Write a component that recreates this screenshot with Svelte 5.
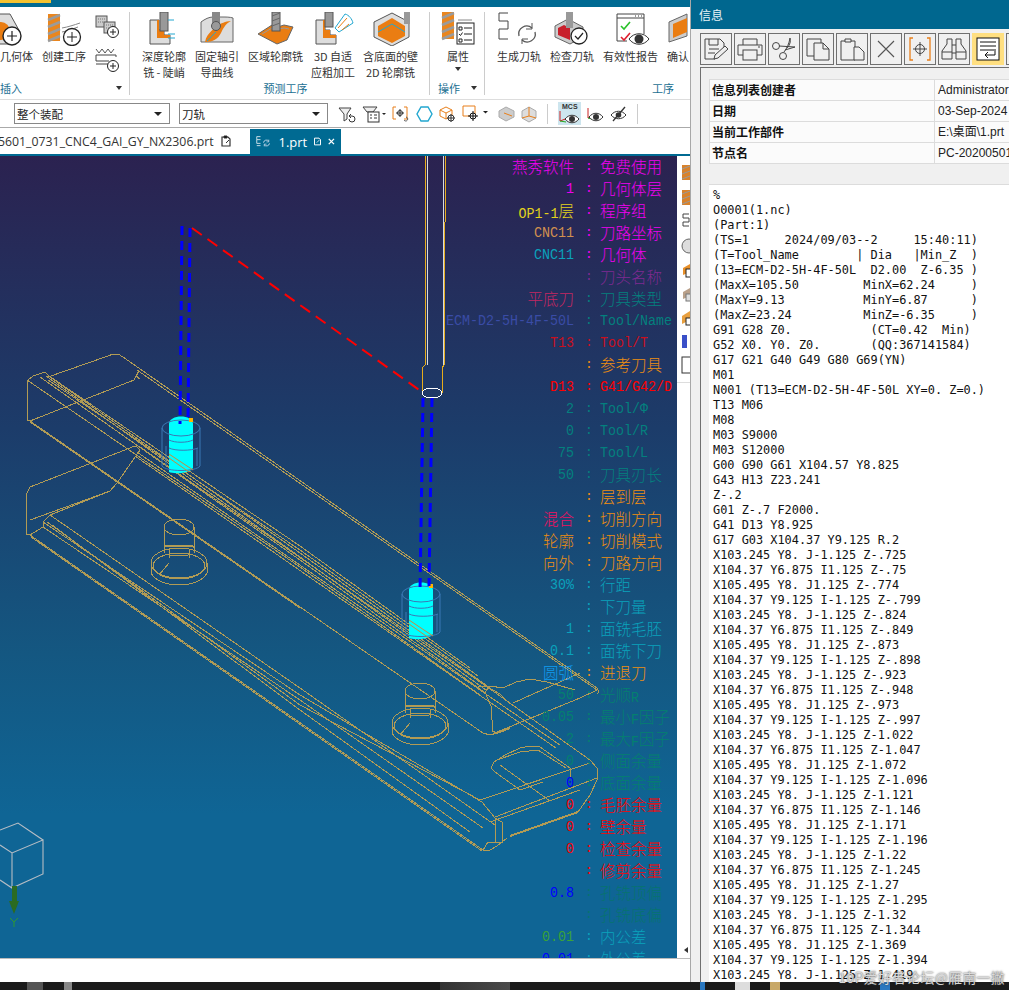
<script>
  const rows = [
    ['燕秀软件', '免费使用', 'mg', 'mg'],
    ['1', '几何体层', 'mg', 'mg'],
    ['OP1-1层', '程序组', 'yl', 'mg'],
    ['CNC11', '刀路坐标', 'tan', 'mg'],
    ['CNC11', '几何体', 'cy', 'mg'],
    ['', '刀头名称', 'pu', 'pu'],
    ['平底刀', '刀具类型', 'ro', 'te'],
    ['ECM-D2-5H-4F-50L', 'Tool/Name', 'bl2', 'te'],
    ['T13', 'Tool/T', 'dr', 'dr'],
    ['', '参考刀具', 'or', 'or'],
    ['D13', 'G41/G42/D', 're', 're'],
    ['2', 'Tool/Φ', 'te', 'te'],
    ['0', 'Tool/R', 'te', 'te'],
    ['75', 'Tool/L', 'te', 'te'],
    ['50', '刀具刃长', 'te', 'te'],
    ['', '层到层', 'or', 'or'],
    ['混合', '切削方向', 'pk', 'or'],
    ['轮廓', '切削模式', 'or', 'or'],
    ['向外', '刀路方向', 'or', 'or'],
    ['30%', '行距', 'cy', 'cy'],
    ['', '下刀量', 'cy', 'cy'],
    ['1', '面铣毛胚', 'cy', 'cy'],
    ['0.1', '面铣下刀', 'cy', 'cy'],
    ['圆弧', '进退刀', 'sk', 'or'],
    ['50', '光顺R', 'gt', 'gt'],
    ['0.05', '最小F因子', 'gt', 'gt'],
    ['2', '最大F因子', 'gt', 'gt'],
    ['0', '侧面余量', 'gt', 'gt'],
    ['0', '底面余量', 'bl', 'gt'],
    ['0', '毛胚余量', 're', 're'],
    ['0', '壁余量', 're', 're'],
    ['0', '检查余量', 're', 're'],
    ['', '修剪余量', 're', 're'],
    ['0.8', '孔铣顶偏', 'bl', 'dt'],
    ['', '孔铣底偏', 'dt', 'dt'],
    ['0.01', '内公差', 'gr', 'cy'],
    ['0.01', '外公差', 'bl', 'cy']
  ];

  // split a string so latin and cjk can get their own size, the source font is double byte
  function runs(s) {
    return s.match(/[\x00-\x7fΦ]+|[^\x00-\x7fΦ]+/g) || [];
  }

  const code = `%
O0001(1.nc)
(Part:1)
(TS=1     2024/09/03--2     15:40:11)
(T=Tool_Name        | Dia   |Min_Z  )
(13=ECM-D2-5H-4F-50L  D2.00  Z-6.35 )
(MaxX=105.50         MinX=62.24     )
(MaxY=9.13           MinY=6.87      )
(MaxZ=23.24          MinZ=-6.35     )
G91 G28 Z0.           (CT=0.42  Min)
G52 X0. Y0. Z0.       (QQ:367141584)
G17 G21 G40 G49 G80 G69(YN)
M01
N001 (T13=ECM-D2-5H-4F-50L XY=0. Z=0.)
T13 M06
M08
M03 S9000
M03 S12000
G00 G90 G61 X104.57 Y8.825
G43 H13 Z23.241
Z-.2
G01 Z-.7 F2000.
G41 D13 Y8.925
G17 G03 X104.37 Y9.125 R.2
X103.245 Y8. J-1.125 Z-.725
X104.37 Y6.875 I1.125 Z-.75
X105.495 Y8. J1.125 Z-.774
X104.37 Y9.125 I-1.125 Z-.799
X103.245 Y8. J-1.125 Z-.824
X104.37 Y6.875 I1.125 Z-.849
X105.495 Y8. J1.125 Z-.873
X104.37 Y9.125 I-1.125 Z-.898
X103.245 Y8. J-1.125 Z-.923
X104.37 Y6.875 I1.125 Z-.948
X105.495 Y8. J1.125 Z-.973
X104.37 Y9.125 I-1.125 Z-.997
X103.245 Y8. J-1.125 Z-1.022
X104.37 Y6.875 I1.125 Z-1.047
X105.495 Y8. J1.125 Z-1.072
X104.37 Y9.125 I-1.125 Z-1.096
X103.245 Y8. J-1.125 Z-1.121
X104.37 Y6.875 I1.125 Z-1.146
X105.495 Y8. J1.125 Z-1.171
X104.37 Y9.125 I-1.125 Z-1.196
X103.245 Y8. J-1.125 Z-1.22
X104.37 Y6.875 I1.125 Z-1.245
X105.495 Y8. J1.125 Z-1.27
X104.37 Y9.125 I-1.125 Z-1.295
X103.245 Y8. J-1.125 Z-1.32
X104.37 Y6.875 I1.125 Z-1.344
X105.495 Y8. J1.125 Z-1.369
X104.37 Y9.125 I-1.125 Z-1.394
X103.245 Y8. J-1.125 Z-1.419`;

  // part wireframe, page coordinates
  const wire = [
    // upper piece
    '45,372 33,376 28,380 27,384 27,420 30,421 483,733 490,735 497,733',
    '48,377 108,356 113,354 118,354 123,357 597,688',
    '137,370 597,690',
    '139,371 136,376 140,379',
    '30,421 134,380 139,371',
    '45,372 50,377 300,553 490,688',
    '46,376 300,557 486,690',
    '40,377 300,560 484,692',
    '27,380 300,567 480,695',
    '48,380 300,550 478,676',
    '52,378 300,546 470,668',
    '30,422 300,608',
    '485,692 491,706 492,720 492,731 497,733',
    '485,692 490,686 503,688 516,682 530,679 547,682 575,690',
    '478,687 486,686 500,694 510,704',
    '513,703 580,673',
    '497,732 580,698 597,690',
    '597,688 599,692 597,694',
    // lower piece
    '30,487 26,495 26,534 30,535',
    '30,487 135,446 137,447 140,450 117,483 110,491 50,515 43,522 43,527 30,535',
    '30,520 110,491',
    '140,447 483,684 590,760',
    '137,452 480,690 560,745',
    '135,456 478,694 556,748',
    '30,535 483,850',
    '31,537 482,851',
    '50,515 300,688 495,825',
    '43,522 300,695 482,802 495,818',
    '43,527 300,700 483,828',
    '47,522 300,705 480,800',
    '52,525 300,710 470,832',
    // end of lower piece
    '483,850 490,850 497,846 507,838',
    '590,760 597,768 598,778 590,795 578,812',
    '480,800 590,763',
    '495,817 597,778',
    '490,822 580,790',
    '495,818 495,842 502,842 502,822 495,818',
    '483,850 488,842 502,842 507,838',
    // pocket on lower piece
    '491,768 494,762 505,755 520,748 530,746 540,747 570,768 570,778',
    '491,768 495,772 520,790 543,782',
    '497,760 520,752 538,750 566,768',
    '500,765 550,801'
  ];

  const bosses = [
    [179, 563, 36],
    [420, 723, 32]
  ];

  const tools = [
    [169, 416],
    [409, 582]
  ];
</script>

<div class="screen">
  <div class="main">
    <div class="topbar"><span class="accent"></span></div>

    <div class="ribbon">
      <div class="group">
        <div class="tools first">
          <div class="tool clip">
            <svg width="33" height="34" viewBox="0 0 33 34">
              <path d="M-4 2 L10 2 L20 20 L12 32 L-4 32Z" fill="#ddd" stroke="#555" />
              <circle cx="1" cy="19" r="9" fill="#ea7d12" />
              <circle cx="12" cy="24" r="9" fill="#fff" stroke="#222" stroke-width="1.4" />
              <path d="M7 24h10M12 19v10" stroke="#222" stroke-width="1.2" />
            </svg>
            <span>几何体</span>
          </div>
          <div class="tool">
            <svg width="44" height="34" viewBox="0 0 44 34">
              <rect x="6" y="2" width="12" height="27" fill="#e9861f" />
              <path d="M6 8l12-5M6 15l12-5M6 22l12-5M6 29l12-5" stroke="#9b9b9b" stroke-width="2.6" />
              <path d="M20 16c6-1 12-3 18-5M20 20c6-1 10-3 16-5M22 24l12-5" stroke="#888" fill="none" />
              <circle cx="30" cy="25" r="8.5" fill="#fff" stroke="#222" stroke-width="1.3" />
              <path d="M25 25h10M30 20v10" stroke="#222" />
            </svg>
            <span>创建工序</span>
          </div>
          <div class="stack">
            <svg width="25" height="24" viewBox="0 0 25 24">
              <rect x="1" y="1" width="11" height="11" fill="#ccc" stroke="#555" />
              <rect x="9" y="7" width="11" height="11" fill="#ccc" stroke="#555" />
              <path d="M3 4h7M3 7h5M11 10h7M11 13h5" stroke="#777" stroke-dasharray="1 1" />
              <circle cx="18" cy="17" r="5.5" fill="#fff" stroke="#222" />
              <path d="M15 17h6M18 14v6" stroke="#222" />
            </svg>
            <svg width="25" height="26" viewBox="0 0 25 26">
              <path d="M1 2l3 4 3-4 3 4 3-4 3 4 3-4" stroke="#555" fill="none" />
              <path d="M1 8h20M1 8v6h13M21 8v2M1 17h12" stroke="#444" fill="none" />
              <circle cx="18" cy="19" r="5.5" fill="#fff" stroke="#222" />
              <path d="M15 19h6M18 16v6" stroke="#222" />
            </svg>
          </div>
        </div>
        <div class="gname insert"><span>插入</span><i class="caret"></i></div>
      </div>

      <div class="group pred">
        <div class="tools">
          <div class="tool">
            <svg width="44" height="34" viewBox="0 0 44 34">
              <path d="M8 8h9v10h5v5h6v9H8Z" fill="#ddd" stroke="#555" />
              <path d="M17 8v10h5v5h6v3h-13V8Z" fill="#ea7d12" />
              <rect x="18" y="0" width="8" height="19" fill="#999" stroke="#555" />
              <path d="M26 8h6M26 22h7M26 26h7" stroke="#22a7d0" />
            </svg>
            <span>深度轮廓<br />铣 - 陡峭</span>
          </div>
          <div class="tool">
            <svg width="44" height="34" viewBox="0 0 44 34">
              <path d="M6 10c4-3 8-5 12-5h9c4 0 8 0 11 1v24H6Z" fill="#ddd" stroke="#666" />
              <path d="M10 30c2-10 10-12 11-18 3 2 8-3 15-3-6 3-8 8-10 12-3 6-8 9-16 9Z" fill="#ea7d12" />
              <path d="M12 29c3-2 6-7 9-9" stroke="#22a7d0" fill="none" />
              <rect x="17" y="0" width="8" height="12" fill="#888" />
              <circle cx="21" cy="14" r="4.5" fill="#999" stroke="#555" />
            </svg>
            <span>固定轴引<br />导曲线</span>
          </div>
          <div class="tool w55">
            <svg width="44" height="34" viewBox="0 0 44 34">
              <path d="M4 22l14-9c3 2 7 2 12 0l9 2-6 13-10 4Z" fill="#ea7d12" stroke="#666" />
              <path d="M8 22l10-6c3 1 8 1 12 0l5 1" stroke="#999" fill="none" />
              <rect x="18" y="0" width="8" height="19" fill="#999" stroke="#555" />
              <path d="M18 4l8-3M18 9l8-3M18 14l8-3" stroke="#666" />
            </svg>
            <span>区域轮廓铣</span>
          </div>
          <div class="tool w42">
            <svg width="44" height="34" viewBox="0 0 44 34">
              <path d="M5 8h9v10h5v5h6v9H5Z" fill="#ddd" stroke="#555" />
              <path d="M14 8v10h5v5h6v3H12V8Z" fill="#ea7d12" />
              <rect x="14" y="0" width="8" height="15" fill="#999" stroke="#555" />
              <path d="M24 16l10-14c4 1 7 5 8 9l-14 9Z" fill="#fff" stroke="#22a7d0" />
              <path d="M27 16l9-10M31 18l7-6" stroke="#ea7d12" />
            </svg>
            <span>3D 自适<br />应粗加工</span>
          </div>
          <div class="tool w55">
            <svg width="44" height="34" viewBox="0 0 44 34">
              <path d="M5 10L23 1l17 9v15L23 34 5 25Z" fill="#ddd" stroke="#555" />
              <path d="M9 14L23 6l13 8v10l-13 7-14-7Z" fill="#ea7d12" />
              <path d="M9 20l14-8 13 8" stroke="#22a7d0" fill="none" />
              <rect x="35" y="0" width="6" height="12" fill="#999" />
            </svg>
            <span>含底面的壁<br />2D 轮廓铣</span>
          </div>
        </div>
        <div class="gname center"><span>预测工序</span></div>
      </div>

      <div class="group ops">
        <div class="tools">
          <div class="tool attr">
            <svg width="36" height="34" viewBox="0 0 36 34">
              <rect x="2" y="0" width="12" height="27" fill="#e9861f" />
              <path d="M2 6l12-5M2 13l12-5M2 20l12-5M2 27l12-5" stroke="#9b9b9b" stroke-width="2.6" />
              <path d="M18 8h14" stroke="#888" />
              <rect x="17" y="11" width="17" height="21" fill="#fff" stroke="#222" />
              <path d="M24 16h8M24 22h8M24 28h8M19 15h3v3h-3ZM19 27h3v3h-3Z" stroke="#222" fill="none" />
              <path d="M19 22l1.5 1.5 2-3" stroke="#222" fill="none" />
            </svg>
            <span>属性</span>
            <i class="caret low"></i>
          </div>
        </div>
        <div class="gname spread"><span>操作</span><i class="caret"></i></div>
      </div>

      <div class="group work">
        <div class="tools">
          <div class="tool">
            <svg width="44" height="34" viewBox="0 0 44 34">
              <path d="M11 1h-9v8h9v8h-9v10h9" stroke="#444" fill="none" />
              <path d="M22 24a8 8 0 0 1 13-8M38 20a8 8 0 0 1-13 8" stroke="#555" stroke-width="1.3" fill="none" />
              <path d="M35 11v6h-6M25 32v-5h6" stroke="#555" fill="none" />
            </svg>
            <span>生成刀轨</span>
          </div>
          <div class="tool">
            <svg width="44" height="34" viewBox="0 0 44 34">
              <path d="M5 14l13-7 15 8v10l-13 7-15-7Z" fill="#ccc" stroke="#666" />
              <path d="M8 16l6-3 6 3v12l-12-5Z" fill="#c8202c" />
              <rect x="16" y="0" width="7" height="16" fill="#999" />
              <circle cx="29" cy="24" r="8" fill="#fff" stroke="#222" stroke-width="1.3" />
              <path d="M25 24l3 3 5-6" stroke="#222" stroke-width="1.2" fill="none" />
            </svg>
            <span>检查刀轨</span>
          </div>
          <div class="tool w55">
            <svg width="44" height="34" viewBox="0 0 44 34">
              <path d="M35 22V2H8v27h10M8 6h27" stroke="#444" fill="none" />
              <path d="M29 4h1M32 4h1M26 4h1" stroke="#333" />
              <path d="M12 14l3 3 6-7" stroke="#2ac12a" stroke-width="1.6" fill="none" />
              <path d="M12 25l3 3 6-7" stroke="#e01f2f" stroke-width="1.6" fill="none" />
              <path d="M20 27c5-7 15-7 20 0-5 7-15 7-20 0Z" fill="#fff" stroke="#333" />
              <circle cx="30" cy="27" r="4.5" fill="#333" />
            </svg>
            <span>有效性报告</span>
          </div>
          <div class="tool clip2">
            <svg width="22" height="34" viewBox="0 0 22 34">
              <path d="M2 10l18-8v22L2 30Z" fill="#ccc" stroke="#666" />
              <path d="M6 12l14-6v14l-14 6Z" fill="#ea7d12" />
            </svg>
            <span>确认</span>
          </div>
        </div>
        <div class="gname right"><span>工序</span></div>
      </div>
    </div>

    <div class="toolbar">
      <div class="combo one"><span>整个装配</span><i class="caret dark"></i></div>
      <div class="combo two"><span>刀轨</span><i class="caret dark"></i></div>
      <div class="ticons">
        <svg width="18" height="18" viewBox="0 0 18 18"><path d="M1 3h12L9 9v5l-3 2V9Z" fill="#eee" stroke="#444" /><path d="M11 14a3 3 0 1 0 3-3h-2M13 9l-2 2 2 2" stroke="#333" fill="none" /></svg>
        <svg width="24" height="18" viewBox="0 0 24 18"><path d="M1 2h14l-4 5H5Z" fill="#eee" stroke="#444" /><rect x="6" y="7" width="11" height="10" fill="#fff" stroke="#333" /><path d="M8 10h2M12 10h3M8 13h2M12 13h3" stroke="#333" /><path d="M20 8h4l-2 2Z" fill="#222" /></svg>
        <svg width="18" height="18" viewBox="0 0 18 18"><path d="M4 2H1v12h3M12 2h3v12h-3" stroke="#e87f1a" fill="none" /><circle cx="8" cy="8" r="2.5" fill="none" stroke="#333" /><path d="M4 8h8M8 4v8" stroke="#333" /><path d="M12 15a2 2 0 1 0 2-3" stroke="#555" fill="none" /></svg>
        <svg width="17" height="18" viewBox="0 0 17 18"><path d="M5 2h7l4 7-4 7H5L1 9Z" fill="none" stroke="#22a7d0" stroke-width="1.4" /></svg>
        <svg width="17" height="18" viewBox="0 0 17 18"><path d="M1 5l6-3 6 3v6l-6 3-6-3ZM1 5l6 3 6-3M7 8v6" fill="none" stroke="#e87f1a" /><circle cx="12" cy="13" r="3" fill="#fff" stroke="#333" /><path d="M8 13h8M12 9v8" stroke="#333" /></svg>
        <svg width="26" height="18" viewBox="0 0 26 18"><path d="M1 1h12v10H1Z" fill="none" stroke="#e87f1a" /><circle cx="11" cy="11" r="3" fill="#fff" stroke="#111" /><path d="M6 11h10M11 6v10" stroke="#111" /><path d="M21 6h5l-2.500 2.500Z" fill="#222" /></svg>
        <svg width="17" height="18" viewBox="0 0 17 18" class="gap"><path d="M1 6l7-4 8 4v6l-8 4-7-4Z" fill="#ccc" stroke="#aaa" /><path d="M6 8l8 3" stroke="#e87f1a" /></svg>
        <svg width="16" height="18" viewBox="0 0 16 18"><path d="M1 6l7-4 7 4v7l-7 4-7-4Z" fill="#ddd" stroke="#aaa" /><path d="M8 2v9l7 2M8 11l-7 2" stroke="#e87f1a" fill="none" /></svg>
        <i class="tsep"></i>
        <div class="mcs">
          <svg width="22" height="23" viewBox="0 0 22 23"><text x="4" y="7" class="mcstxt">MCS</text><path d="M2 19L2 9M2 19l8-3" stroke="#c22" /><path d="M2 19l6 1" stroke="#2a2" /><path d="M7 17c4-5 10-5 14 0-4 5-10 5-14 0Z" fill="#fff" stroke="#333" /><circle cx="14" cy="17" r="3" fill="#333" /></svg>
        </div>
        <svg width="17" height="18" viewBox="0 0 17 18"><path d="M1 13V3M1 13l8-3" stroke="#c22" /><path d="M1 13l4 1" stroke="#2a2" /><path d="M2 12c4-5 10-5 14 0-4 5-10 5-14 0Z" fill="#fff" stroke="#333" /><circle cx="9" cy="12" r="3" fill="#333" /></svg>
        <svg width="17" height="18" viewBox="0 0 17 18"><path d="M1 10c4-5 11-5 15 0-4 5-11 5-15 0Z" fill="#fff" stroke="#333" /><circle cx="8.500" cy="10" r="2.800" fill="#333" /><path d="M15 2L3 16" stroke="#333" stroke-width="1.300" /></svg>
        <i class="tsep"></i>
      </div>
    </div>

    <div class="tabs">
      <div class="tab file">
        <span>5601_0731_CNC4_GAI_GY_NX2306.prt</span>
        <svg width="12" height="13" viewBox="0 0 12 13"><path d="M2 2h6l2 2v7H2Z" fill="none" stroke="#333" stroke-width="1.200" /><path d="M4 1h3v2H4ZM6 8l3-3" stroke="#333" /></svg>
      </div>
      <div class="tab active">
        <svg width="22" height="15" viewBox="0 0 22 15"><path d="M6 1H1v4h5M1 5v5h5M1 13h5" stroke="#fff" fill="none" /><path d="M10 9a4 4 0 0 1 7-2M18 10a4 4 0 0 1-7 2" stroke="#cde" fill="none" stroke-width="1.200" /><path d="M17 5v3h-3M11 14v-3h3" stroke="#cde" fill="none" /></svg>
        <span>1.prt</span>
        <svg width="12" height="13" viewBox="0 0 12 13"><path d="M2 2h6l2 2v7H2Z" fill="none" stroke="#fff" stroke-width="1.300" /><path d="M5 8l4-4" stroke="#fff" /></svg>
        <svg width="9" height="9" viewBox="0 0 9 9"><path d="M1 1l7 7M8 1l-7 7" stroke="#fff" stroke-width="1.800" /></svg>
      </div>
    </div>

    <div class="workarea">
      <div class="viewport">
        <svg class="scene" width="677" height="803" viewBox="0 156 677 803">
          <g fill="none" stroke="#b19b55" shape-rendering="crispEdges">
            {#each wire as w}
              <polyline points={w} />
            {/each}
            {#each bosses as [x, y, rise]}
              <ellipse cx={x} cy={y} rx="28" ry="15" />
              <ellipse cx={x} cy={y + 3} rx="26" ry="13" />
              <path d={`M${x - 28} ${y}v10M${x + 28} ${y}v10`} />
              <path d={`M${x - 28} ${y + 10}c8 16 48 16 56 0`} />
              <ellipse cx={x} cy={y - rise} rx="15" ry="8" />
              <path d={`M${x - 15} ${y - rise}v${rise - 10}M${x + 15} ${y - rise}v${rise - 10}M${x - 10} ${y - 14}v9M${x + 10} ${y - 14}v9`} />
              <path d={`M${x - 15} ${y - 16}c3 -2 27 -2 30 0`} stroke-width="2" />
              <path d={`M${x - 13} ${y - 9}c3 2 23 2 26 0`} />
              <path d={`M${x - 20} ${y + 12}l10-12`} />
            {/each}
            <path d="M510 836L578 812" stroke-width="2" />
            <path d="M497 733L510 728" stroke-width="2" />
          </g>

          <!-- tool shank coming down from the top -->
          <g fill="none" shape-rendering="crispEdges">
            <path d="M425 156V365L422 368V393M445 156V222L444 223V365L442 368V393" stroke="#e6ac1c" />
            <path d="M427 156V365M443 156V365" stroke="#d7dbe0" />
            <ellipse cx="432" cy="393" rx="10" ry="5" stroke="#fff" />
          </g>

          {#each tools as [x, y]}
            <path d={`M${x} ${y + 8}c0 -10 24 -10 24 0V${y + 52}c-4 6 -20 6 -24 4Z`} fill="#00ffff" />
            <g fill="none" stroke="#3b79b5">
              <ellipse cx={x + 12} cy={y + 12} rx="19" ry="8" />
              <path d={`M${x - 7} ${y + 12}V${y + 50}c4 6 34 6 38 0V${y + 12}`} />
              <path d={`M${x} ${y + 24}c6 3 18 3 24 0M${x - 3} ${y + 30}V${y + 50}M${x} ${y + 32}c6 3 22 3 29 0M${x + 28} ${y + 32}V${y + 50}`} />
            </g>
            <path d={`M${x} ${y + 38}l24 16M${x} ${y + 42}l20 14`} stroke="#c98a3c" fill="none" />
            <rect x={x + 20} y={y + 2} width="4" height="4" fill="#ffb400" />
          {/each}

          <g fill="none" stroke="#0000ff" stroke-width="3" stroke-dasharray="9 6">
            <path d="M182 226L180 424" />
            <path d="M190 228L188 420" />
            <path d="M432 398L429 586" />
            <path d="M423 398L420 592" />
          </g>
          <path d="M192 228L422 392" stroke="#ff0000" stroke-width="2" stroke-dasharray="12 7" fill="none" />

          <g fill="none" stroke="#b7bdc4" stroke-width="1.100">
            <path d="M0 830L18 823L43 840L12 853L0 845M43 840V874L12 888L0 880M12 853V888" />
          </g>
          <path d="M12 886h5v15l2 0-5 13-5-13 3 0Z" fill="#2b6b22" />
          <path d="M10 918l4 4 4-4M14 922v5" stroke="#2f9a30" fill="none" />
        </svg>

        <div class="info-text">
          {#each rows as [val, label, vc, lc]}
            <div class={'val ' + vc}>
              {#each runs(val) as r}
                <span class={/^[\x00-\x7f]/.test(r) ? 'lat' : 'cjk'}>{r}</span>
              {/each}
            </div>
            <div class={'col ' + lc}>:</div>
            <div class={'lab ' + lc}>
              {#each runs(label) as r}
                <span class={/^[\x00-\x7fΦ]/.test(r) ? 'lat' : 'cjk'}>{r}</span>
              {/each}
            </div>
          {/each}
        </div>
      </div>

      <div class="side">
        <svg width="13" height="226" viewBox="0 0 13 226">
          <rect x="5" y="9" width="8" height="15" fill="#d9822b" />
          <path d="M5 13l8-3M5 18l8-3M5 23l8-3" stroke="#999" />
          <rect x="5" y="34" width="8" height="15" fill="#d9822b" />
          <path d="M5 38l8-3M5 43l8-3M5 48l8-3" stroke="#999" />
          <path d="M12 58H6v4h6v4H6v4h6" stroke="#444" fill="none" />
          <circle cx="12" cy="90" r="7" fill="#ddd" stroke="#666" />
          <path d="M6 112l7-4v8l-7 3Z" fill="#e8902a" />
          <rect x="9" y="113" width="6" height="8" fill="#fff" stroke="#222" />
          <path d="M6 136l7-4v8l-7 3Z" fill="#b9a08a" />
          <rect x="9" y="138" width="6" height="7" fill="#ddd" stroke="#777" />
          <path d="M5 160l8-5v9l-8 4Z" fill="#e8a040" />
          <rect x="9" y="162" width="6" height="7" fill="#fff" stroke="#222" />
          <rect x="5" y="179" width="5" height="13" fill="#3a50c8" />
          <rect x="5" y="201" width="9" height="16" fill="#fff" stroke="#333" />
        </svg>
        <i class="side-sep"></i>
        <i class="tri"></i>
      </div>
    </div>

    <div class="statusbar"></div>
  </div>

  <div class="window">
    <div class="wtitle">信息</div>
    <div class="wtools">
      <button aria-label="save"><svg width="24" height="24" viewBox="0 0 24 24"><path d="M1 2h15l4 4v5M1 2v20h10M5 2v6h9V2M5 12h10M4 16h7" fill="none" stroke="#444" /><path d="M10 22l1-4 10-9 3 3-10 9Z" fill="#eee" stroke="#444" /></svg></button>
      <button aria-label="print"><svg width="26" height="24" viewBox="0 0 26 24"><path d="M6 8V2h14v6M6 18H1V8h24v10h-5" fill="none" stroke="#444" /><rect x="6" y="13" width="14" height="10" fill="none" stroke="#444" /><path d="M21 10h2" stroke="#444" /></svg></button>
      <button aria-label="cut"><svg width="26" height="24" viewBox="0 0 26 24"><circle cx="5" cy="9" r="3.500" fill="none" stroke="#444" /><circle cx="12" cy="19" r="3.500" fill="none" stroke="#444" /><path d="M8 9l16 1-10 3M13 15c3-4 5-8 6-14 1 3 0 7-3 10" fill="none" stroke="#444" /></svg></button>
      <button aria-label="copy"><svg width="26" height="24" viewBox="0 0 26 24"><path d="M2 2h14v17H2Z" fill="none" stroke="#444" /><path d="M9 6h9l6 6v11H9Z" fill="#f0f0f0" stroke="#444" /><path d="M18 6v6h6" fill="none" stroke="#444" /></svg></button>
      <button aria-label="paste"><svg width="26" height="24" viewBox="0 0 26 24"><path d="M6 4H2v19h14V4h-4" fill="none" stroke="#444" /><path d="M6 5V2h6v3Z" fill="none" stroke="#444" /><path d="M15 10h5l5 5v8H15Z" fill="#f0f0f0" stroke="#444" /></svg></button>
      <button aria-label="delete"><svg width="24" height="24" viewBox="0 0 24 24"><path d="M4 4l16 16M20 4L4 20" stroke="#555" stroke-width="1.100" /></svg></button>
      <button aria-label="goto"><svg width="24" height="24" viewBox="0 0 24 24"><path d="M5 1H2v22h3M19 1h3v22h-3" fill="none" stroke="#e87f1a" stroke-width="1.300" /><circle cx="12" cy="12" r="4.500" fill="none" stroke="#444" /><path d="M5 12h14M12 5v14" stroke="#444" /></svg></button>
      <button aria-label="find"><svg width="26" height="24" viewBox="0 0 26 24"><path d="M1 22v-8l5-7V2h5v20ZM25 22v-8l-5-7V2h-5v20ZM11 8h4M11 16h4M1 15h10M15 15h10" fill="none" stroke="#444" /></svg></button>
      <button class="on" aria-label="wrap"><svg width="24" height="24" viewBox="0 0 24 24"><rect x="1" y="1" width="22" height="22" fill="#fff" stroke="#111" /><path d="M4 5h16M4 9h16M4 13h16" stroke="#111" /><path d="M19 14v4H9M12 15l-3 3 3 3" fill="none" stroke="#111" /></svg></button>
      <button aria-label="more"></button>
    </div>
    <div class="wbody">
      <div class="facts">
        <div class="k">信息列表创建者</div><div class="v">Administrator</div>
        <div class="k">日期</div><div class="v">03-Sep-2024</div>
        <div class="k">当前工作部件</div><div class="v">E:\桌面\1.prt</div>
        <div class="k">节点名</div><div class="v">PC-20200501</div>
      </div>
      <pre class="listing">{code}</pre>
    </div>
  </div>

  <div class="taskbar">
    <span class="t1"></span><span class="t2"></span><span class="t3"></span><span class="t4"></span><span class="t5"></span><span class="t6"></span><span class="t7"></span>
  </div>
  <div class="watermark">10P爱好者论坛@雁南一撇</div>
</div>

<style>
  :global(body) {
    margin: 0;
    background: #fff;
  }

  .screen {
    position: relative;
    width: 1009px;
    height: 990px;
    overflow: hidden;
    display: flex;
    font-family: "Noto Sans CJK SC", sans-serif;
    color: #333;
  }

  .main {
    width: 690px;
    flex: none;
    display: flex;
    flex-direction: column;
  }

  .topbar {
    height: 7px;
    background: #006a92;
  }
  .accent {
    display: block;
    width: 51px;
    height: 3px;
    background: #f2c230;
  }

  /* ribbon */
  .ribbon {
    height: 93px;
    display: flex;
    overflow: hidden;
    border-bottom: 1px solid #ddd;
    box-sizing: border-box;
    background: #fff;
  }
  .group {
    position: relative;
    display: flex;
    flex-direction: column;
    border-right: 1px solid #ccc;
    margin: 5px 0 4px;
    flex: none;
  }
  .group:first-child {
    width: 129px;
  }
  .pred {
    width: 300px;
    padding-left: 12px;
    box-sizing: border-box;
  }
  .ops {
    width: 55px;
    padding-left: 15px;
    box-sizing: border-box;
  }
  .work {
    border-right: 0;
    padding-left: 12px;
  }
  .tools {
    display: flex;
    gap: 9px;
    height: 72px;
  }
  .tool {
    display: flex;
    flex-direction: column;
    align-items: center;
    width: 44px;
    flex: none;
    font-size: 11px;
    line-height: 16px;
    text-align: center;
    white-space: nowrap;
  }
  .tool span {
    margin-top: 2px;
  }
  .tool.clip {
    width: 33px;
    overflow: hidden;
  }
  .tool.w55 {
    width: 55px;
  }
  .tool.w42 {
    width: 42px;
  }
  .tool.attr {
    width: 26px;
  }
  .tool.clip2 {
    width: 22px;
  }
  .stack {
    display: flex;
    flex-direction: column;
    gap: 8px;
    margin-top: 3px;
  }
  .gname {
    font-size: 11px;
    line-height: 14px;
    color: #1c6f92;
    display: flex;
    align-items: center;
  }
  .gname.insert,
  .gname.spread {
    justify-content: space-between;
    padding-right: 7px;
  }
  .gname.spread {
    margin-left: -7px;
  }
  .gname.center {
    justify-content: center;
  }
  .gname.right {
    justify-content: flex-end;
    padding-right: 15px;
  }
  .caret {
    width: 0;
    height: 0;
    border: 3px solid transparent;
    border-top: 4px solid #333;
    border-bottom: 0;
  }
  .caret.low {
    margin-top: 3px;
  }

  /* toolbar under the ribbon */
  .toolbar {
    height: 28px;
    display: flex;
    align-items: center;
    box-sizing: border-box;
    padding-left: 14px;
    gap: 9px;
    border-bottom: 1px solid #aaa;
    background: #fff;
  }
  .combo {
    height: 21px;
    box-sizing: border-box;
    border: 1px solid #888;
    display: flex;
    align-items: center;
    justify-content: space-between;
    padding: 0 7px 0 2px;
    font-size: 11.500px;
    color: #222;
  }
  .combo.one {
    width: 156px;
  }
  .combo.two {
    width: 149px;
  }
  .caret.dark {
    border-width: 4px;
    border-top-color: #222;
    border-bottom: 0;
  }
  .ticons {
    display: flex;
    align-items: center;
    gap: 6px;
    margin-left: 1px;
  }
  .ticons .gap {
    margin-left: 4px;
  }
  .tsep {
    width: 1px;
    height: 20px;
    background: #ccc;
    margin: 0 4px;
  }
  .mcs {
    width: 23px;
    height: 23px;
    background: #cde5ee;
  }
  .mcstxt {
    font: 700 7px "Liberation Sans", sans-serif;
    fill: #333;
  }

  /* file tabs */
  .tabs {
    height: 26px;
    display: flex;
    align-items: flex-end;
    justify-content: space-between;
    width: 341px;
    font: 12.300px "Open Sans", "Liberation Sans", sans-serif;
  }
  .tab {
    display: flex;
    align-items: center;
    gap: 6px;
    height: 25px;
    white-space: nowrap;
  }
  .tab.file {
    margin-left: -2px;
  }
  .tab.active {
    width: 91px;
    box-sizing: border-box;
    padding: 0 6px 0 6px;
    gap: 6px;
    background: #006a92;
    color: #fff;
    font-size: 13px;
  }

  /* graphics window */
  .workarea {
    height: 805px;
    display: flex;
    box-sizing: border-box;
    border-top: 2px solid #006a92;
    border-bottom: 1px solid #bbb;
    flex: none;
  }
  .viewport {
    position: relative;
    width: 677px;
    flex: none;
    overflow: hidden;
    background: linear-gradient(#2b2250 0%, #1c3c6a 34%, #145781 62%, #0f6595 82%, #0f6595 100%);
  }
  .scene {
    position: absolute;
    left: 0;
    top: 0;
  }
  .info-text {
    position: absolute;
    left: 0;
    top: -1px;
    display: grid;
    grid-template-columns: 574px 26px auto;
    grid-auto-rows: 22px;
    align-items: center;
    font-family: "Liberation Mono", "Noto Sans CJK SC", monospace;
    white-space: nowrap;
  }
  .val {
    text-align: right;
  }
  .col {
    font-size: 13px;
    padding-left: 11px;
  }
  .lat {
    font-size: 13.330px;
    display: inline-block;
    transform: scaleY(1.150);
  }
  .cjk {
    font-family: "Noto Sans CJK SC", sans-serif;
    font-size: 15.500px;
    font-weight: 300;
  }
  .mg { color: #f000f0; }
  .yl { color: #e2d21c; }
  .tan { color: #d2904f; }
  .cy { color: #0aa2bc; }
  .pu { color: #7f2a92; }
  .ro { color: #c42762; }
  .te { color: #04807e; }
  .bl2 { color: #3a4ca6; }
  .dr { color: #c8101e; }
  .or { color: #ee8e10; }
  .re { color: #ff0000; }
  .pk { color: #f00f60; }
  .sk { color: #109cf0; }
  .gt { color: #04806f; }
  .bl { color: #0000ff; }
  .dt { color: #07736f; }
  .gr { color: #3aa238; }

  .side {
    position: relative;
    flex: 1;
    background: #fff;
    overflow: hidden;
  }
  .side svg {
    display: block;
  }
  .side-sep {
    display: block;
    height: 1px;
    background: #ddd;
  }
  .tri {
    position: absolute;
    right: 2px;
    bottom: 5px;
    border: 3px solid transparent;
    border-right: 4px solid #333;
    border-left: 0;
  }
  .statusbar {
    flex: 1;
    background: #fff;
  }

  /* info window */
  .window {
    flex: 1;
    min-width: 0;
    background: #f0f0f0;
    border-left: 1px solid #a8a8a8;
    display: flex;
    flex-direction: column;
    overflow: hidden;
  }
  .wtitle {
    height: 29px;
    flex: none;
    background: #00678f;
    color: #e8f3f7;
    font-size: 12px;
    line-height: 30px;
    padding-left: 8px;
  }
  .wtools {
    display: flex;
    gap: 2px;
    padding: 4px 0 2px 9px;
    flex: none;
  }
  .wtools button {
    width: 32px;
    height: 32px;
    flex: none;
    padding: 0;
    background: #f0f0f0;
    border: 1px solid #707070;
    display: flex;
    align-items: center;
    justify-content: center;
  }
  .wtools button.on {
    background: #ffdf80;
    border-color: #ffdf80;
  }
  .wbody {
    flex: 1;
    margin-left: 9px;
    border: 1px solid #707070;
    border-right: 0;
    padding: 11px 0 0 8px;
    box-sizing: border-box;
  }
  .facts {
    display: grid;
    grid-template-columns: 225px 1fr;
    grid-auto-rows: 21px;
    background: #fbfbfb;
    border: solid #dcdcdc;
    border-width: 1px 0 0 1px;
    width: 300px;
    font-size: 12px;
  }
  .facts > div {
    border-bottom: 1px solid #dcdcdc;
    line-height: 20px;
    white-space: nowrap;
    overflow: hidden;
    box-sizing: border-box;
  }
  .k {
    font-weight: 700;
    color: #111;
    border-right: 1px solid #dcdcdc;
    padding-left: 2px;
  }
  .v {
    padding-left: 3px;
    color: #222;
    font-family: "Liberation Sans", "Noto Sans CJK SC", sans-serif;
  }
  .listing {
    margin: 20px 0 0;
    height: 800px;
    padding: 3px 0 0 4px;
    box-sizing: border-box;
    overflow: hidden;
    background: #fff;
    border-top: 1px solid #dcdcdc;
    font: 11.900px/15px "DejaVu Sans Mono", monospace;
    color: #111;
  }

  /* desktop taskbar and the forum watermark lie over everything */
  .taskbar {
    position: absolute;
    left: 0;
    right: 0;
    bottom: 0;
    height: 8px;
    background: #1b1b1b;
    display: flex;
  }
  .taskbar span {
    flex: none;
  }
  .t1 {
    width: 16px;
    margin-left: 27px;
    background: #555;
  }
  .t2 {
    width: 8px;
    margin-left: 21px;
    background: #888;
  }
  .t3 {
    width: 70px;
    margin-left: 368px;
    background: linear-gradient(90deg, #333, #4a4a4a);
  }
  .t4 {
    width: 5px;
    margin-left: 190px;
    background: #2a78c0;
  }
  .t5 {
    width: 15px;
    margin-left: 30px;
    background: #ddd;
  }
  .t6 {
    width: 10px;
    margin-left: 20px;
    background: #c8a868;
  }
  .t7 {
    width: 10px;
    margin-left: 100px;
    background: #2a78c0;
  }
  .watermark {
    position: absolute;
    right: 4px;
    bottom: 4px;
    font-size: 13.800px;
    line-height: 18px;
    color: #d8d8d8;
    letter-spacing: 0.400px;
    text-shadow: 0 0 2px #333;
  }
</style>
